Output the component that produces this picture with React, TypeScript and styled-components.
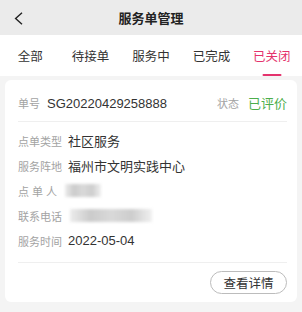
import React, { useState } from 'react';
import styled, { createGlobalStyle } from 'styled-components';

const GlobalStyle = createGlobalStyle`
  html, body {
    margin: 0;
    padding: 0;
    background: #f4f4f4;
    font-family: "Liberation Sans", "Noto Sans CJK SC", sans-serif;
  }
`;

const Page = styled.div`
  width: 302px;
  min-height: 312px;
  background: #f4f4f4;
`;

const Header = styled.div`
  height: 35px;
  display: flex;
  align-items: center;
  justify-content: center;
  position: relative;
  background: #ebebeb;
`;

const BackButton = styled.div`
  position: absolute;
  left: 11px;
  top: 10px;
  width: 14px;
  height: 16px;
  display: flex;
  align-items: center;
  justify-content: center;
`;

const Title = styled.h1`
  margin: 0;
  font-size: 13px;
  font-weight: bold;
  color: #222;
`;

const TabBar = styled.div`
  height: 41px;
  display: flex;
  background: #fff;
`;

const Tab = styled.div<{ $active?: boolean }>`
  flex: 1;
  display: flex;
  align-items: center;
  justify-content: center;
  position: relative;
  font-size: 12.5px;
  color: ${p => (p.$active ? '#e4336d' : '#333')};

  &::after {
    content: '';
    display: ${p => (p.$active ? 'block' : 'none')};
    position: absolute;
    bottom: 0;
    left: 50%;
    transform: translateX(-50%);
    width: 19px;
    height: 2px;
    border-radius: 1px;
    background: #e4336d;
  }
`;

const List = styled.div`
  padding: 4px 5px 10px;
`;

const Card = styled.div`
  background: #fff;
  border-radius: 6px;
  padding: 0 10px 8px 13px;
`;

const OrderRow = styled.div`
  display: flex;
  align-items: center;
  padding: 14px 0 7px;
  line-height: 20px;
  border-bottom: 1px solid #efefef;
`;

const SmallLabel = styled.span`
  font-size: 11px;
  color: #a3a3a3;
`;

const OrderNo = styled.span`
  font-size: 13px;
  color: #333;
  margin-left: 7px;
  flex: 1;
`;

const Status = styled.span`
  font-size: 13px;
  color: #4cae4c;
  margin-left: 9px;
`;

const InfoList = styled.div`
  padding: 6px 0 9px;
  border-bottom: 1px solid #efefef;
`;

const InfoRow = styled.div`
  display: flex;
  align-items: center;
  height: 25px;
`;

const InfoLabel = styled.span<{ $spaced?: boolean }>`
  width: ${p => (p.$spaced ? '45px' : '50px')};
  font-size: 11px;
  color: #a3a3a3;
  letter-spacing: ${p => (p.$spaced ? '3px' : '0')};
  white-space: nowrap;
`;

const InfoValue = styled.span`
  font-size: 13px;
  color: #333;
`;

// privacy mosaic over personal data
const Blurred = styled.span<{ $w: number }>`
  display: inline-block;
  width: ${p => p.$w}px;
  height: 13px;
  margin-left: 2px;
  background: linear-gradient(90deg, #ececec, #cbcbcb 25%, #d9d9d9 50%, #cdcdcd 75%, #f0f0f0);
  filter: blur(1.5px);
`;

const Footer = styled.div`
  display: flex;
  justify-content: flex-end;
  padding-top: 8px;
`;

const DetailButton = styled.button`
  width: 77px;
  height: 23px;
  border: 1px solid #bcbcbc;
  border-radius: 12px;
  background: #fff;
  font-family: inherit;
  font-size: 12.5px;
  color: #333;
  padding: 0;
  cursor: pointer;
`;

const tabs = ['全部', '待接单', '服务中', '已完成', '已关闭'];

export default function App() {
  const [active, setActive] = useState(4);

  return (
    <Page>
      <GlobalStyle />
      <Header>
        <BackButton>
          <svg width="9" height="13" viewBox="0 0 9 13">
            <path d="M8 0.8 L1.6 6.5 L8 12.2" fill="none" stroke="#222" strokeWidth="1.4" />
          </svg>
        </BackButton>
        <Title>服务单管理</Title>
      </Header>
      <TabBar>
        {tabs.map((t, i) => (
          <Tab key={t} $active={i === active} onClick={() => setActive(i)}>
            {t}
          </Tab>
        ))}
      </TabBar>
      <List>
        <Card>
          <OrderRow>
            <SmallLabel>单号</SmallLabel>
            <OrderNo>SG20220429258888</OrderNo>
            <SmallLabel>状态</SmallLabel>
            <Status>已评价</Status>
          </OrderRow>
          <InfoList>
            <InfoRow>
              <InfoLabel>点单类型</InfoLabel>
              <InfoValue>社区服务</InfoValue>
            </InfoRow>
            <InfoRow>
              <InfoLabel>服务阵地</InfoLabel>
              <InfoValue>福州市文明实践中心</InfoValue>
            </InfoRow>
            <InfoRow>
              <InfoLabel $spaced>点单人</InfoLabel>
              <Blurred $w={36} />
            </InfoRow>
            <InfoRow>
              <InfoLabel>联系电话</InfoLabel>
              <Blurred $w={82} />
            </InfoRow>
            <InfoRow>
              <InfoLabel>服务时间</InfoLabel>
              <InfoValue>2022-05-04</InfoValue>
            </InfoRow>
          </InfoList>
          <Footer>
            <DetailButton>查看详情</DetailButton>
          </Footer>
        </Card>
      </List>
    </Page>
  );
}
